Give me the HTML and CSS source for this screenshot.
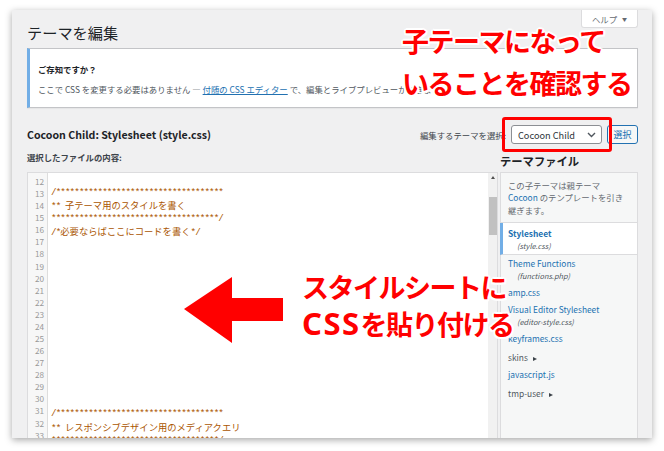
FILE: index.html
```html
<!DOCTYPE html>
<html lang="ja">

<head>
    <meta charset="UTF-8">
    <meta name="viewport" content="width=device-width, initial-scale=1.0">
    <title>テーマを編集</title>

    <link rel="stylesheet" href="styles.css">
</head>

<body>
    <div class="shot">
        <div class="title-row">
            <h1>テーマを編集</h1>
            <span class="help">ヘルプ <i class="help__arrow">▼</i></span>
        </div>

        <div class="notice">
            <p class="notice__title">ご存知ですか？</p>
            <p>ここで CSS を変更する必要はありません — <a href="#">付随の CSS エディター</a> で、編集とライブプレビューができます。</p>
        </div>

        <div class="sub-head">
            <h2>Cocoon Child: Stylesheet (style.css)</h2>
            <div class="theme-select">
                <label>編集するテーマを選択:</label>
                <span class="select">Cocoon Child
                    <svg width="9" height="6" viewBox="0 0 9 6"><polyline points="1,1 4.5,4.5 8,1" fill="none" stroke="#50575e" stroke-width="1.4"/></svg>
                </span>
                <span class="btn">選択</span>
            </div>
        </div>

        <div class="edit-area">
            <div class="main-col">
                <p class="content-label">選択したファイルの内容:</p>
                <div class="editor">
                    <div class="gutter">12
13
14
15
16
17
18
19
20
21
22
23
24
25
26
27
28
29
30
31
32
33</div>
                    <pre class="code">

/************************************
** <span class="ja">子テーマ用のスタイルを書く</span>
************************************/
/*<span class="ja">必要ならばここにコードを書く</span>*/














/************************************
** <span class="ja">レスポンシブデザイン用のメディアクエリ</span>
************************************/</pre>
                    <div class="scrollbar">
                        <span class="scrollbar__up"></span>
                        <span class="scrollbar__thumb"></span>
                    </div>
                </div>
            </div>

            <div class="side-col">
                <h2 class="files-title">テーマファイル</h2>
                <div class="files">
                    <p class="files__info">この子テーマは親テーマ<br><a href="#">Cocoon</a> のテンプレートを引き<br>継ぎます。</p>
                    <ul class="files__list">
                        <li class="file file--current"><a href="#">Stylesheet</a><span class="file__sub">(style.css)</span></li>
                        <li class="file"><a href="#">Theme Functions</a><span class="file__sub">(functions.php)</span></li>
                        <li class="file"><a href="#">amp.css</a></li>
                        <li class="file"><a href="#">Visual Editor Stylesheet</a><span class="file__sub">(editor-style.css)</span></li>
                        <li class="file"><a href="#">keyframes.css</a></li>
                        <li class="file file--dir">skins <span class="tri"></span></li>
                        <li class="file"><a href="#">javascript.js</a></li>
                        <li class="file file--dir">tmp-user <span class="tri"></span></li>
                    </ul>
                </div>
            </div>
        </div>

        <!-- annotations -->
        <div class="callout-box"></div>
        <p class="note note--top">子テーマになって<br>いることを確認する</p>
        <svg class="big-arrow" width="99" height="66" viewBox="0 0 99 66">
            <polygon points="0,32 48,0 48,21 99,21 99,44 48,44 48,66" fill="#ff0000"/>
        </svg>
        <p class="note note--left">スタイルシートに<br><span class="latin">CSS</span>を貼り付ける</p>
    </div>
</body>

</html>
```

FILE: styles.css
```css
* {
    box-sizing: border-box;
}

body {
    margin: 0;
    padding: 10px 12px;
    background: #fff;
    font-family: "Noto Sans CJK JP", "Noto Sans", sans-serif;
    font-size: 8.4px;
    color: #3c434a;
}

a {
    color: #2271b1;
    text-decoration: none;
}

.shot {
    position: relative;
    width: 640px;
    height: 428px;
    overflow: hidden;
    padding: 0 14px 0 15px;
    background: #f0f0f1;
    box-shadow: 0 2px 7px rgba(0, 0, 0, 0.35);
}

/* header */
.title-row {
    display: flex;
    justify-content: space-between;
    align-items: flex-start;
}

h1 {
    margin: 12px 0 0;
    font-size: 15.2px;
    font-weight: 400;
    line-height: 20px;
    color: #1d2327;
}

.help {
    display: flex;
    align-items: center;
    justify-content: center;
    gap: 5px;
    width: 57px;
    height: 18px;
    background: #fff;
    border: 1px solid #dcdcde;
    border-top: 0;
    border-radius: 0 0 3px 3px;
    color: #646970;
}

.help__arrow {
    font-style: normal;
    font-size: 5px;
}

.notice {
    margin-top: 6px;
    padding: 10px 8px 8px;
    background: #fff;
    border: 1px solid #c3c4c7;
    border-left: 3px solid #72aee6;
    box-shadow: 0 1px 1px rgba(0, 0, 0, 0.04);
    color: #50575e;
}

.notice p {
    margin: 0;
    line-height: 20px;
    white-space: nowrap;
}

.notice .notice__title {
    font-weight: 700;
    color: #1d2327;
}

.notice a {
    text-decoration: underline;
}

.sub-head {
    display: flex;
    justify-content: space-between;
    align-items: center;
    padding: 17px 0 2px;
}

h2 {
    margin: 0;
    font-size: 10.6px;
    font-weight: 600;
    line-height: 19px;
    color: #1d2327;
}

.theme-select {
    display: flex;
    align-items: center;
    gap: 5px;
}

.select {
    display: flex;
    align-items: center;
    justify-content: space-between;
    width: 91px;
    height: 19px;
    padding: 0 5px 0 6px;
    background: #fff;
    border: 1px solid #8c8f94;
    border-radius: 3px;
    font-size: 9.2px;
    color: #2c3338;
}

.btn {
    display: flex;
    align-items: center;
    justify-content: center;
    width: 31px;
    height: 19px;
    background: #f6f7f7;
    border: 1px solid #2271b1;
    border-radius: 3px;
    font-size: 9px;
    color: #2271b1;
}

/* editor + file list */
.edit-area {
    display: flex;
    gap: 2px;
}

.main-col {
    width: 471px;
}

.content-label {
    margin: 0 0 4px;
    line-height: 22px;
    font-weight: 600;
    color: #3c434a;
}

.editor {
    display: flex;
    height: 268px;
    background: #fff;
    border: 1px solid #dcdcde;
    overflow: hidden;
}

.gutter {
    width: 20px;
    padding: 2px 3px 0 0;
    background: #f7f7f7;
    border-right: 1px solid #ddd;
    text-align: right;
    white-space: pre;
    font-size: 8.2px;
    line-height: 12.08px;
    color: #999;
}

.code {
    flex: 1;
    margin: 0;
    padding: 2px 0 0 3px;
    font-family: "Liberation Mono", "Noto Sans CJK JP", monospace;
    font-size: 9.3px;
    line-height: 12.08px;
    letter-spacing: -0.93px;
    color: #a50;
}

.code .ja {
    font-family: "Noto Sans CJK JP", sans-serif;
    letter-spacing: 0;
}

.scrollbar {
    display: flex;
    flex-direction: column;
    align-items: center;
    width: 9px;
    background: #f1f1f1;
}

.scrollbar__up {
    margin-top: 3px;
    border: 2.5px solid transparent;
    border-top: 0;
    border-bottom: 3px solid #505050;
}

.scrollbar__thumb {
    width: 8px;
    height: 38px;
    margin-top: 18px;
    background: #c1c1c1;
}

.side-col {
    display: flex;
    flex-direction: column;
    width: 138px;
}

.files-title {
    padding-top: 4px;
    font-size: 11.3px;
    line-height: 22px;
    font-weight: 700;
}

.files {
    flex: 1;
    background: #f6f7f7;
    border: 1px solid #dcdcde;
}

.files__info {
    margin: 0;
    padding: 5.75px 7px;
    line-height: 12.5px;
    color: #646970;
    border-bottom: 1px solid #dcdcde;
}

.files__list {
    margin: 0;
    padding: 0;
    list-style: none;
}

.file {
    padding: 2px 7px;
    line-height: 13px;
}

.file__sub {
    display: block;
    padding-left: 9px;
    line-height: 12px;
    font-size: 7.4px;
    font-style: italic;
    color: #50575e;
}

.file--current {
    margin-left: -1px;
    padding: 3.5px 7px 2.5px 5px;
    background: #fff;
    border-left: 3px solid #72aee6;
    border-bottom: 1px solid #dcdcde;
}

.file--current a {
    font-weight: 700;
}

.file--dir {
    padding-top: 4px;
    color: #50575e;
}

.tri {
    display: inline-block;
    margin-left: 3px;
    border: 2.5px solid transparent;
    border-right: 0;
    border-left: 4px solid #3c434a;
}

/* red annotations */
.callout-box {
    position: absolute;
    left: 490px;
    top: 107px;
    width: 110px;
    height: 35px;
    border: 3px solid #ff0000;
    border-radius: 3px;
}

.big-arrow {
    position: absolute;
    left: 172px;
    top: 267px;
}

.note {
    position: absolute;
    margin: 0;
    white-space: nowrap;
    font-size: 27px;
    font-weight: 700;
    letter-spacing: -1.5px;
    color: #ff0000;
    text-shadow: 2px 0 #fff, -2px 0 #fff, 0 2px #fff, 0 -2px #fff,
        1.5px 1.5px #fff, -1.5px -1.5px #fff, 1.5px -1.5px #fff, -1.5px 1.5px #fff;
}

.note--top {
    left: 390px;
    top: 10px;
    line-height: 42px;
}

.note--left {
    left: 290px;
    top: 258px;
    line-height: 37px;
}

.note .latin {
    font-family: "Noto Sans", sans-serif;
    font-size: 31px;
    line-height: 1;
    letter-spacing: 1.5px;
}
```
